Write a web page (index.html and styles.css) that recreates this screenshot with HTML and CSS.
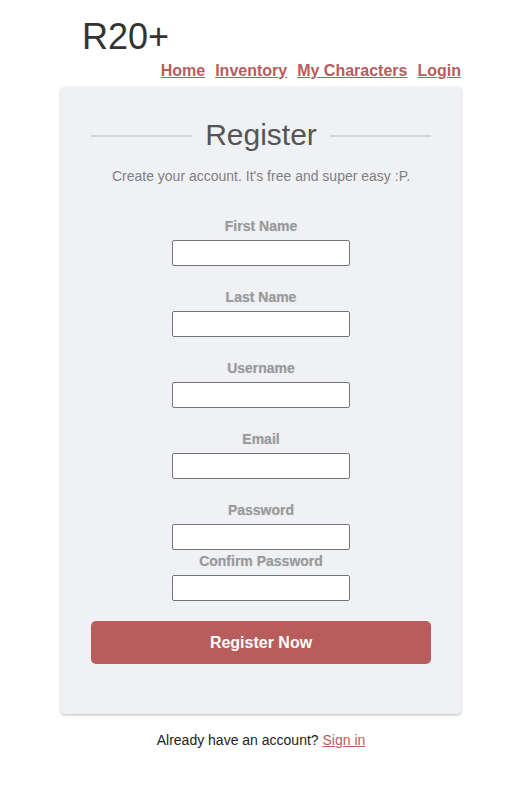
FILE: index.html
```html
<!DOCTYPE html>
<html lang="en">
<head>
<meta charset="utf-8">
<title>R20+ Register</title>
<link rel="stylesheet" href="styles.css">
</head>
<body>
<div class="page">
  <header class="site-header">
    <h1 class="logo">R20+</h1>
    <nav class="nav">
      <a href="#">Home</a>
      <a href="#">Inventory</a>
      <a href="#">My Characters</a>
      <a href="#">Login</a>
    </nav>
  </header>

  <main class="card">
    <div class="card-title">
      <span class="rule"></span>
      <h2>Register</h2>
      <span class="rule"></span>
    </div>
    <p class="subtitle">Create your account. It's free and super easy :P.</p>

    <form class="form">
      <div class="field">
        <label for="fn">First Name</label>
        <input id="fn" type="text">
      </div>
      <div class="field">
        <label for="ln">Last Name</label>
        <input id="ln" type="text">
      </div>
      <div class="field">
        <label for="un">Username</label>
        <input id="un" type="text">
      </div>
      <div class="field">
        <label for="em">Email</label>
        <input id="em" type="email">
      </div>
      <div class="field field-tight">
        <label for="pw">Password</label>
        <input id="pw" type="password">
      </div>
      <div class="field">
        <label for="cpw">Confirm Password</label>
        <input id="cpw" type="password">
      </div>
      <button type="button" class="btn">Register Now</button>
    </form>
  </main>

  <p class="footer-note">Already have an account? <a href="#">Sign in</a></p>
</div>
</body>
</html>
```

FILE: styles.css
```css
html, body {
  margin: 0;
  padding: 0;
  background: #ffffff;
}

body {
  font-family: "Liberation Sans", Arial, sans-serif;
  color: #222222;
}

.page {
  width: 400px;
  margin-left: 61px;
}

.site-header {
  padding-top: 17px;
}

.logo {
  margin: 0 0 5px 21px;
  font-size: 36px;
  line-height: 40px;
  font-weight: normal;
  color: #333333;
}

.nav {
  display: flex;
  justify-content: flex-end;
  gap: 10px;
}

.nav a {
  font-size: 16px;
  line-height: 18px;
  font-weight: bold;
  color: #b85c5c;
  text-decoration: underline;
}

.card {
  margin-top: 7px;
  background: #f0f1f5;
  border-radius: 4px;
  box-shadow: 0 1px 3px rgba(0, 0, 0, 0.28);
  padding: 31px 30px 50px;
}

.card-title {
  display: flex;
  align-items: center;
  gap: 13px;
}

.card-title .rule {
  flex: 1;
  height: 2px;
  background: #d3d4d6;
  margin-top: 1px;
}

.card-title h2 {
  margin: 0;
  font-size: 30px;
  line-height: 34px;
  font-weight: normal;
  color: #555555;
}

.subtitle {
  margin: 16px 0 0;
  text-align: center;
  font-size: 14px;
  line-height: 16px;
  color: #808080;
}

.form {
  display: flex;
  flex-direction: column;
  align-items: center;
  margin-top: 34px;
}

.field {
  display: flex;
  flex-direction: column;
  align-items: center;
  gap: 6px;
  margin-bottom: 23px;
}

.field-tight {
  margin-bottom: 3px;
}

.field label {
  font-size: 14px;
  line-height: 16px;
  font-weight: bold;
  color: #9a9a9a;
  text-shadow: 0 0 1px rgba(120, 120, 120, 0.35);
}

.field input {
  box-sizing: border-box;
  width: 178px;
  height: 26px;
  border: 1px solid #767676;
  border-radius: 2px;
  background: #ffffff;
  padding: 1px 4px;
  font-family: inherit;
  font-size: 13px;
}

.field:last-of-type {
  margin-bottom: 20px;
}

.btn {
  align-self: stretch;
  height: 43px;
  border: none;
  border-radius: 5px;
  background: #b95c5c;
  color: #ffffff;
  font-family: inherit;
  font-size: 16px;
  font-weight: bold;
}

.footer-note {
  margin: 18px 0 0;
  text-align: center;
  font-size: 14px;
  line-height: 16px;
  color: #222222;
}

.footer-note a {
  color: #b85c5c;
  text-decoration: underline;
}
```
